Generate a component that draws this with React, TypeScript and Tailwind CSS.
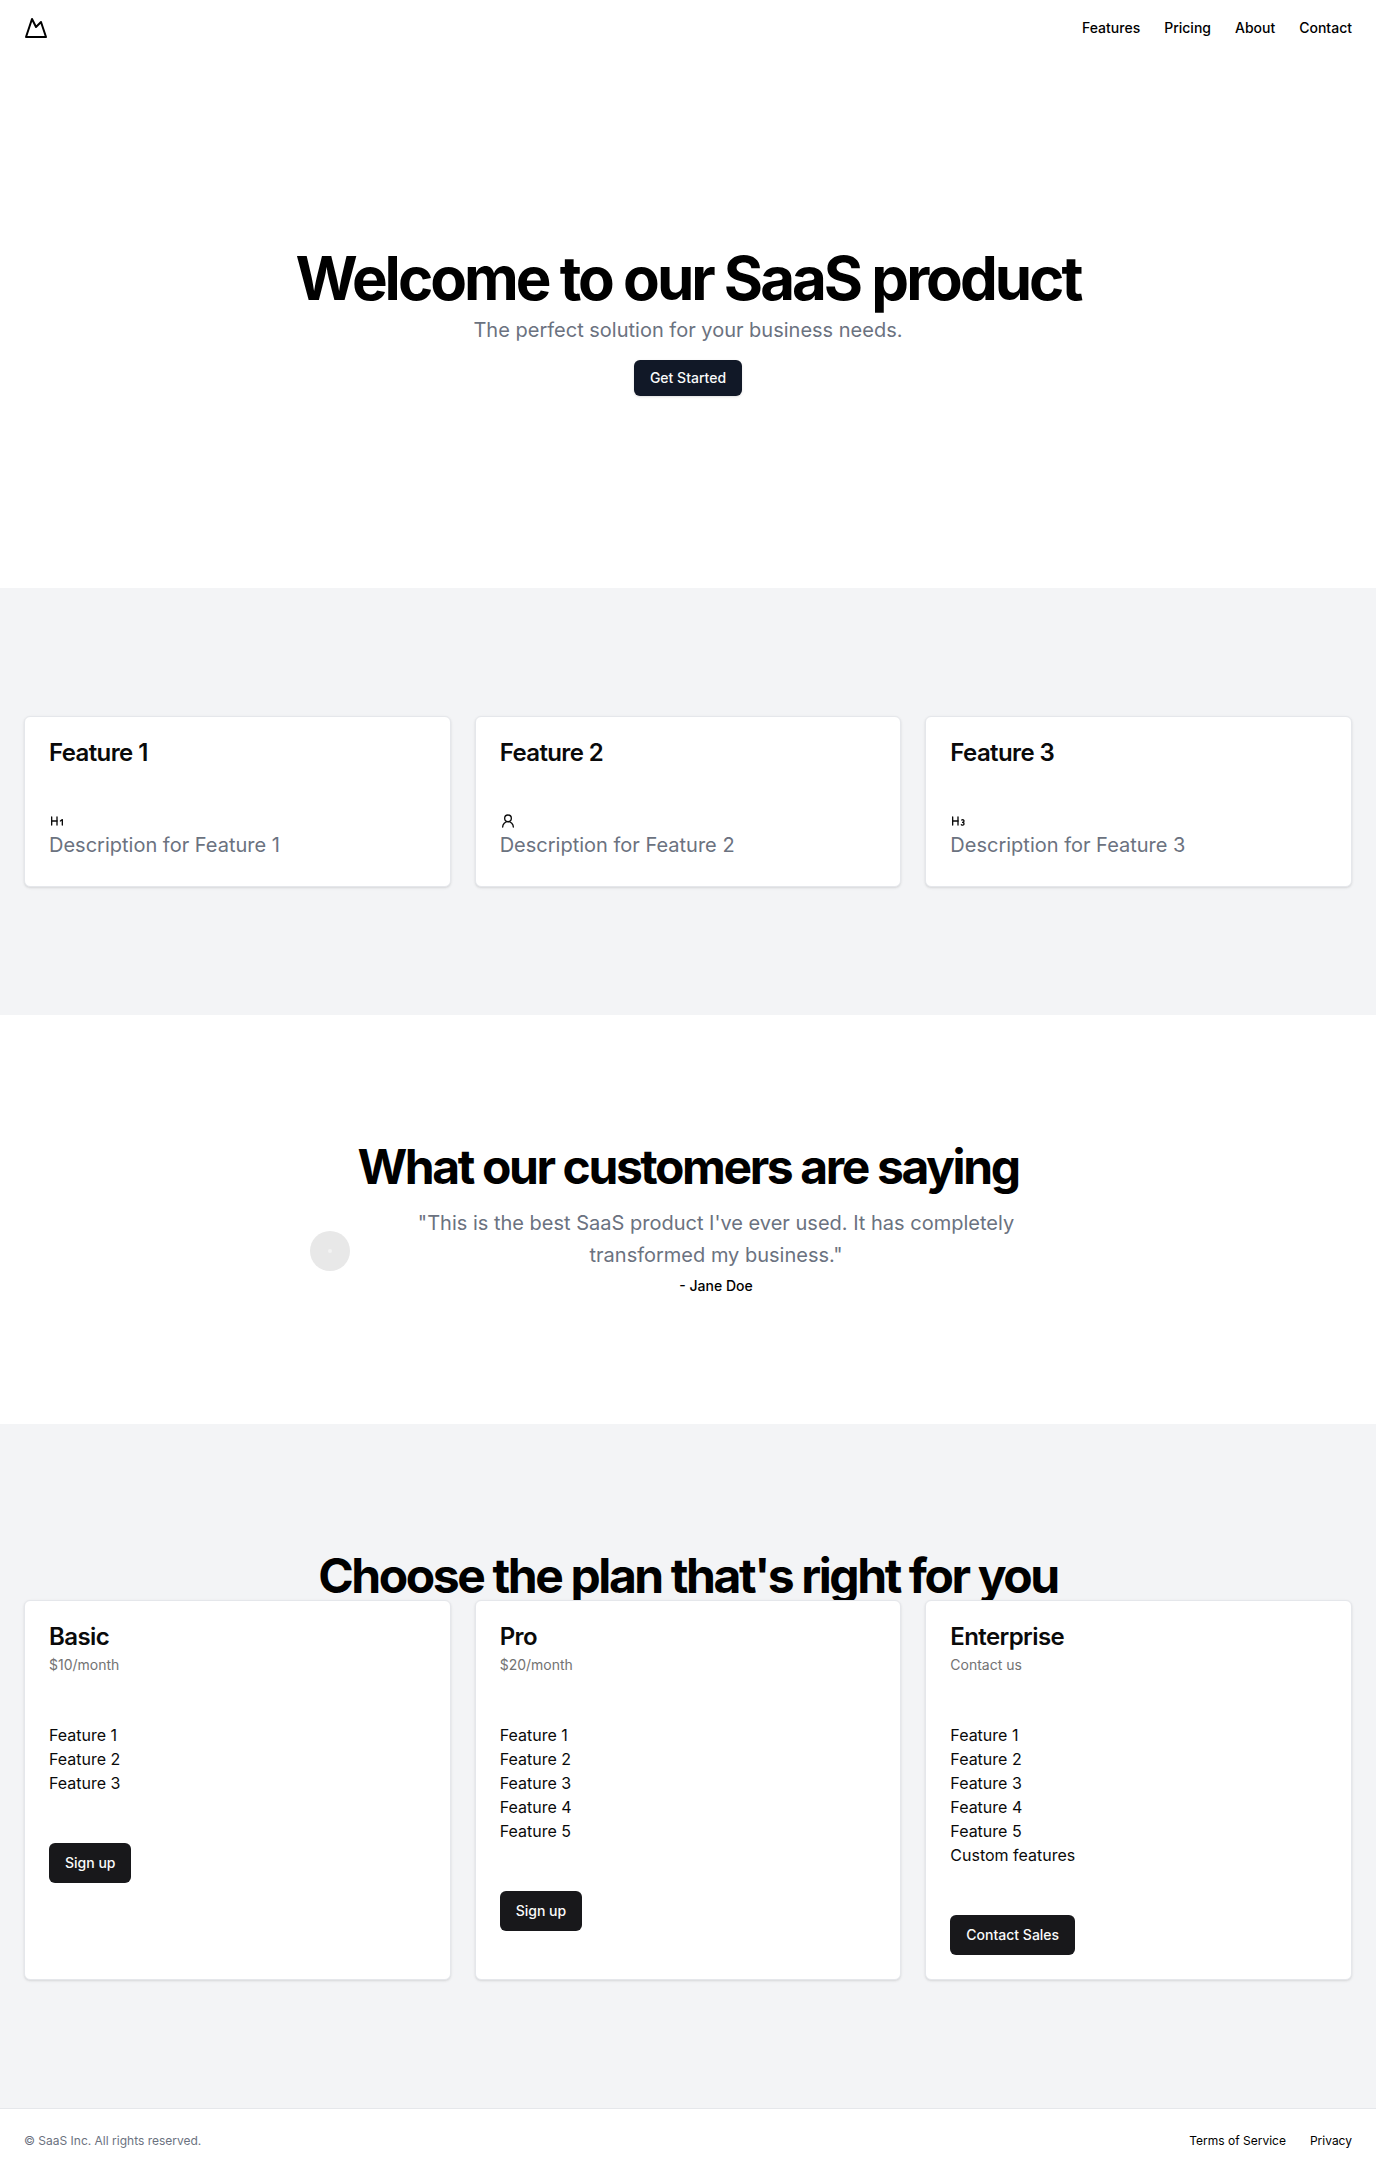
import React from "react";

const card = "rounded-md border border-gray-200 bg-white text-[#0a0a0a] shadow-sm";
const navLink = "text-sm font-medium hover:underline underline-offset-4";
const blurb = "text-xl leading-relaxed text-[#6b7280]";

function Icon({ children }: { children: React.ReactNode }) {
  return (
    <svg className="h-4 w-4" viewBox="0 0 24 24" fill="none" stroke="currentColor" strokeWidth="2" strokeLinecap="round" strokeLinejoin="round" aria-hidden="true">
      {children}
    </svg>
  );
}

const features = [
  { n: 1, icon: <Icon><path d="M4 12h8" /><path d="M4 18V6" /><path d="M12 18V6" /><path d="m17 12 3-2v8" /></Icon> },
  { n: 2, icon: <Icon><circle cx="12" cy="8" r="5" /><path d="M20 21a8 8 0 1 0-16 0" /></Icon> },
  { n: 3, icon: <Icon><path d="M4 12h8" /><path d="M4 18V6" /><path d="M12 18V6" /><path d="M17.5 10.5c1.7-1 3.5 0 3.5 1.5a2 2 0 0 1-2 2" /><path d="M17 17.5c2 1.5 4 .3 4-1.5a2 2 0 0 0-2-2" /></Icon> },
];

const plans = [
  { name: "Basic", price: "$10/month", items: ["Feature 1", "Feature 2", "Feature 3"], cta: "Sign up" },
  { name: "Pro", price: "$20/month", items: ["Feature 1", "Feature 2", "Feature 3", "Feature 4", "Feature 5"], cta: "Sign up" },
  { name: "Enterprise", price: "Contact us", items: ["Feature 1", "Feature 2", "Feature 3", "Feature 4", "Feature 5", "Custom features"], cta: "Contact Sales" },
];

export default function App() {
  return (
    <div className="flex flex-col bg-white font-['Inter',sans-serif] text-black">
      <header className="flex h-14 items-center px-6">
        <a href="#" aria-label="SaaS Inc. home">
          <svg className="h-6 w-6" viewBox="0 0 24 24" fill="none" stroke="currentColor" strokeWidth="2" strokeLinecap="round" strokeLinejoin="round" aria-hidden="true">
            <path d="m8 3 4 8 5-5 5 15H2L8 3z" />
          </svg>
        </a>
        <nav className="ml-auto flex gap-6">
          {["Features", "Pricing", "About", "Contact"].map((l) => (
            <a key={l} href="#" className={navLink}>{l}</a>
          ))}
        </nav>
      </header>
      <main>
        <section className="flex flex-col items-center gap-4 px-6 py-48 text-center">
          <div>
            <h1 className="text-6xl leading-none font-bold tracking-tighter">Welcome to our SaaS product</h1>
            <p className="mt-2 text-xl text-[#6b7280]">The perfect solution for your business needs.</p>
          </div>
          <button className="h-9 rounded-md bg-[#111827] px-4 text-sm font-medium text-gray-50 shadow-sm">Get Started</button>
        </section>
        <section className="bg-gray-100 px-6 py-32">
          <div className="grid gap-6 md:grid-cols-3">
            {features.map((f) => (
              <div key={f.n} className={card}>
                <div className="p-6">
                  <h3 className="text-2xl leading-none font-semibold tracking-tight">Feature {f.n}</h3>
                </div>
                <div className="p-6">
                  {f.icon}
                  <p className={blurb}>Description for Feature {f.n}</p>
                </div>
              </div>
            ))}
          </div>
        </section>
        <section className="px-6 py-32">
          <h2 className="text-center text-5xl leading-none font-bold tracking-tighter">What our customers are saying</h2>
          <div className="mt-4 flex items-center justify-center gap-4">
            <span className="flex h-10 w-10 shrink-0 items-center justify-center rounded-full bg-[#e8e8e8]">
              <span className="h-1 w-1 rounded-full bg-[#f3f3f3]" />
            </span>
            <div className="max-w-[700px] space-y-1 text-center">
              <p className={blurb}>"This is the best SaaS product I've ever used. It has completely transformed my business."</p>
              <p className="text-sm font-medium">- Jane Doe</p>
            </div>
          </div>
        </section>
        <section className="bg-gray-100 px-6 py-32">
          <h2 className="text-center text-5xl leading-none font-bold tracking-tighter">Choose the plan that's right for you</h2>
          <div className="grid gap-6 md:grid-cols-3">
            {plans.map((p) => (
              <div key={p.name} className={card}>
                <div className="flex flex-col gap-1.5 p-6">
                  <h3 className="text-2xl leading-none font-semibold tracking-tight">{p.name}</h3>
                  <p className="text-sm text-neutral-500">{p.price}</p>
                </div>
                <ul className="p-6">
                  {p.items.map((i) => <li key={i}>{i}</li>)}
                </ul>
                <div className="p-6">
                  <button className="h-10 rounded-md bg-[#18181b] px-4 text-sm font-medium text-neutral-50">{p.cta}</button>
                </div>
              </div>
            ))}
          </div>
        </section>
      </main>
      <footer className="flex items-center border-t border-gray-200 px-6 py-6">
        <p className="text-xs text-[#6b7280]">© SaaS Inc. All rights reserved.</p>
        <nav className="ml-auto flex gap-6">
          <a href="#" className="text-xs">Terms of Service</a>
          <a href="#" className="text-xs">Privacy</a>
        </nav>
      </footer>
    </div>
  );
}
